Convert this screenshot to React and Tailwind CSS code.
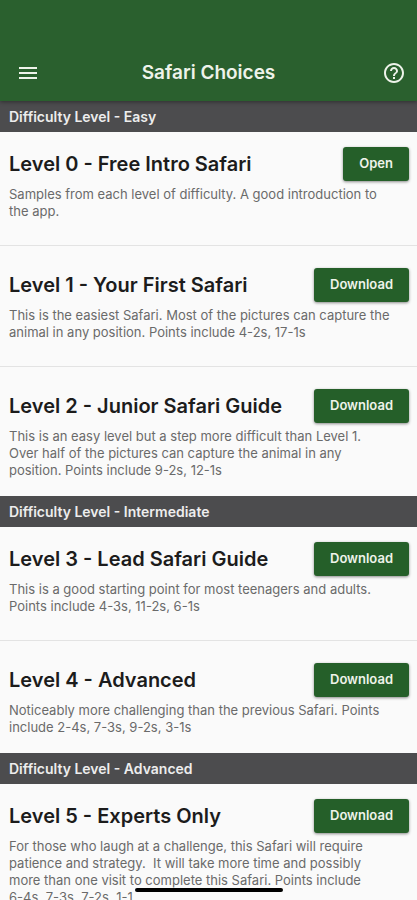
import React from 'react';
import { MdMenu, MdHelpOutline } from 'react-icons/md';

const sections = [
  {
    name: 'Easy',
    levels: [
      {
        title: 'Level 0 - Free Intro Safari',
        description: 'Samples from each level of difficulty. A good introduction to the app.',
        action: 'Open',
      },
      {
        title: 'Level 1 - Your First Safari',
        description:
          'This is the easiest Safari. Most of the pictures can capture the animal in any position. Points include 4-2s, 17-1s',
        action: 'Download',
      },
      {
        title: 'Level 2 - Junior Safari Guide',
        description:
          'This is an easy level but a step more difficult than Level 1. Over half of the pictures can capture the animal in any position. Points include 9-2s, 12-1s',
        action: 'Download',
      },
    ],
  },
  {
    name: 'Intermediate',
    levels: [
      {
        title: 'Level 3 - Lead Safari Guide',
        description: 'This is a good starting point for most teenagers and adults. Points include 4-3s, 11-2s, 6-1s',
        action: 'Download',
      },
      {
        title: 'Level 4 - Advanced',
        description: 'Noticeably more challenging than the previous Safari. Points include 2-4s, 7-3s, 9-2s, 3-1s',
        action: 'Download',
      },
    ],
  },
  {
    name: 'Advanced',
    levels: [
      {
        title: 'Level 5 - Experts Only',
        description:
          'For those who laugh at a challenge, this Safari will require patience and strategy.  It will take more time and possibly more than one visit to complete this Safari. Points include\n6-4s, 7-3s, 7-2s, 1-1',
        action: 'Download',
      },
    ],
  },
];

const AppBar = () => (
  <header className="relative z-10 flex-shrink-0 bg-[#2a602e] pt-[45px] shadow-[0_1px_4px_rgba(0,0,0,0.4)]">
    <div className="grid grid-cols-[1fr_auto_1fr] items-center h-14 px-[11px] text-[#eef3ea]">
      <button type="button" aria-label="Menu" className="justify-self-start pl-[5px]">
        <MdMenu className="w-6 h-6" />
      </button>
      <h1 className="text-[19px] leading-6 font-semibold">Safari Choices</h1>
      <button type="button" aria-label="Help" className="justify-self-end">
        <MdHelpOutline className="w-6 h-6" />
      </button>
    </div>
  </header>
);

const LevelItem = ({ level }) => (
  <li className="group">
    <div className="pl-[9px] pr-2 pt-[15px] pb-[17px]">
      <div className="flex items-center justify-between">
        <h3 className="text-xl leading-6 font-semibold text-[#1c1c1c]">{level.title}</h3>
        <button
          type="button"
          className="h-[34px] px-4 rounded-[3px] bg-[#255f29] text-[13px] font-semibold text-[#eef3ea] shadow-[0_1px_3px_rgba(0,0,0,0.45)]"
        >
          {level.action}
        </button>
      </div>
      <p className="mt-[5px] pr-[18px] text-[13px] leading-[17px] text-[#6a6a6a] whitespace-pre-wrap">
        {level.description}
      </p>
    </div>
    <div className="h-4 pt-2 group-last:hidden">
      <div className="border-t border-[#e3e3e3]" />
    </div>
  </li>
);

const App = () => (
  <div
    className="flex flex-col h-screen overflow-hidden bg-[#fafafa]"
    style={{ fontFamily: 'Inter, Roboto, sans-serif' }}
  >
    <AppBar />
    <main className="flex-1 overflow-y-auto [scrollbar-width:none]">
      {sections.map((section) => (
        <section key={section.name}>
          <h2 className="h-[31px] px-[9px] bg-[#4c4c4e] text-sm leading-[31px] font-semibold text-[#ededed]">
            Difficulty Level - {section.name}
          </h2>
          <ul>
            {section.levels.map((level) => (
              <LevelItem key={level.title} level={level} />
            ))}
          </ul>
        </section>
      ))}
    </main>
    <div className="fixed z-20 bottom-2 left-1/2 -translate-x-1/2 w-[148px] h-1 rounded-full bg-black" />
  </div>
);

export default App;
